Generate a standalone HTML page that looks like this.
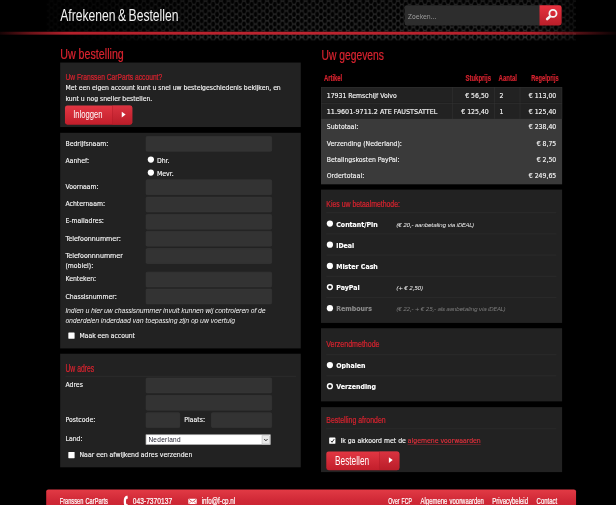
<!DOCTYPE html>
<html lang="nl">
<head>
<meta charset="utf-8">
<title>Afrekenen &amp; Bestellen - Franssen CarParts</title>
<style>
html,body{margin:0;padding:0;background:#000;overflow:hidden}
body{width:616px;height:505px;position:relative}
#page{position:absolute;left:0;top:0;width:1280px;height:1050px;transform:scale(0.48125);transform-origin:0 0;background:#000;color:#fff;font-family:"DejaVu Sans","Liberation Sans",sans-serif;font-size:12.8px;overflow:hidden}
#page *{box-sizing:border-box}
.abs{position:absolute}
.cd{display:inline-block;white-space:nowrap;transform-origin:0 50%;font-family:"Liberation Sans",sans-serif;font-weight:normal;line-height:1}
.cdr{transform-origin:100% 50%}
.red{color:#d8232f}
h1,h2,h3,p{margin:0;padding:0;font-weight:normal}
h3 .cd,h2 .cd,footer .cd{-webkit-text-stroke:0.5px currentColor}
h1 .cd{word-spacing:-0.08em}
.th .cd{-webkit-text-stroke:0.4px currentColor}
footer .cd{word-spacing:0.12em}
.panel{position:absolute;background:#222}
.t{position:absolute;white-space:nowrap;line-height:1}
input.f{position:absolute;background:#333;border:1px solid #3b3b3b;border-radius:3px;height:32px;padding:0;margin:0;display:block}
.lbl{position:absolute;white-space:nowrap;line-height:1;color:#f6f6f6;-webkit-text-stroke:0.28px currentColor}
.hr{position:absolute;height:2px;background:#2b2b2b}
.radio{position:absolute;width:13px;height:13px;border-radius:50%;background:#fff}
.radio.on{background:#1a1a1a;border:3.6px solid #fff}
.chk{position:absolute;width:13px;height:13px;background:#fff;border-radius:1px}
.btn{position:absolute;height:39px;border-radius:5px;background:linear-gradient(#e23743,#c21e2b);overflow:hidden}
.btn .sep{position:absolute;top:0;bottom:0;width:42px;right:0;background:linear-gradient(#da3340,#ba1d29);border-left:1px solid #b01a26}
.btn .arr{position:absolute;width:0;height:0;border-left:8px solid #fff;border-top:6.5px solid transparent;border-bottom:6.5px solid transparent}
.b{font-weight:bold}
.i{font-style:italic;-webkit-text-stroke:0 !important}
</style>
</head>
<body>
<div id="page">
<header>
<svg class="abs" style="left:96px;top:0" width="1101" height="90" viewBox="0 0 1101 90">
<defs>
<pattern id="hex" width="16" height="13.6" patternUnits="userSpaceOnUse" patternTransform="translate(3 2.4)">
<rect width="16" height="13.6" fill="#020202"/>
<path d="M2.66 6.8 L5.33 0 M10.67 0 L13.34 6.8 L10.67 13.6 M5.33 13.6 L2.66 6.8" fill="none" stroke="#2a2a2a" stroke-width="2.6"/>
<path d="M4.6 0 L11.4 0 M4.6 13.6 L11.4 13.6 M12.6 6.8 L16 6.8 M0 6.8 L3.4 6.8" fill="none" stroke="#3e3e3e" stroke-width="3"/>
</pattern>
<linearGradient id="hfade" x1="0" y1="0" x2="0" y2="1">
<stop offset="0" stop-color="#999"/><stop offset="0.5" stop-color="#bbb"/><stop offset="0.73" stop-color="#bbb"/><stop offset="0.8" stop-color="#fff"/><stop offset="0.9" stop-color="#fff"/><stop offset="0.945" stop-color="#000"/><stop offset="1" stop-color="#000"/>
</linearGradient>
<mask id="hm"><rect width="1101" height="90" fill="url(#hfade)"/></mask>
<linearGradient id="hfade2" x1="0" y1="0" x2="1" y2="0">
<stop offset="0" stop-color="#2a2a2a"/><stop offset="0.12" stop-color="#555"/><stop offset="0.3" stop-color="#ddd"/><stop offset="0.45" stop-color="#fff"/><stop offset="0.93" stop-color="#fff"/><stop offset="1" stop-color="#777"/>
</linearGradient>
<mask id="hm2"><rect width="1101" height="90" fill="url(#hfade2)"/></mask>
<linearGradient id="hfade3" x1="0" y1="0" x2="1" y2="0">
<stop offset="0" stop-color="#000"/><stop offset="0.03" stop-color="#000"/><stop offset="0.25" stop-color="#fff"/><stop offset="1" stop-color="#fff"/>
</linearGradient>
<mask id="hm3"><rect width="1101" height="66" fill="#fff"/><rect y="66" width="1101" height="24" fill="url(#hfade3)"/></mask>
</defs>
<g mask="url(#hm3)"><g mask="url(#hm2)"><rect width="1101" height="90" fill="url(#hex)" mask="url(#hm)"/></g></g>
</svg>
<div class="abs" style="left:0;top:66px;width:1280px;height:6.2px;background:linear-gradient(90deg,rgba(180,30,40,0.12) 0,rgba(180,30,40,0.6) 5%,#b4202b 11%,#bd2530 50%,#b4202b 86%,rgba(180,30,40,0.05) 100%)"></div>
<h1 class="t " style="left:124.5px;top:14.8px;font-size:34px;color:#f2f2f2"><span class="cd" id="title" style="transform:scaleX(0.7432)">Afrekenen &amp; Bestellen</span></h1>
<form class="abs" style="left:840.5px;top:11px;width:326px;height:41.5px">
<input type="text" value="Zoeken..." style="position:absolute;left:0;top:0;width:281px;height:41.5px;background:#2d2d2d;border:0;border-radius:4px 0 0 4px;color:#9c9c9c;font:12.8px 'DejaVu Sans',sans-serif;padding:5px 0 0 7px;margin:0">
<button type="button" style="position:absolute;left:280px;top:0;width:46px;height:41.5px;border:0;padding:0;margin:0;border-radius:0 5px 5px 0;background:linear-gradient(#e8323f,#b81e29)">
<svg class="abs" style="left:0;top:0" width="46" height="40" viewBox="0 0 46 40"><circle cx="28" cy="16.8" r="7.4" fill="none" stroke="#f4f4f4" stroke-width="3.8"/><path d="M21.2 24 L16 28.4" stroke="#f4f4f4" stroke-width="5.6" stroke-linecap="round"/></svg>
</button>
</form>
</header>
<main>
<section>
<h2 class="t red" style="left:124.5px;top:97.4px;font-size:30.5px"><span class="cd" id="h_best" style="transform:scaleX(0.7293)">Uw bestelling</span></h2>
<div class="panel" style="left:124.5px;top:130px;width:500.3px;height:134px">
<h3 class="t red" style="left:11.5px;top:19.3px;font-size:20px"><span class="cd" id="h_acc" style="transform:scaleX(0.6955)">Uw Franssen CarParts account?</span></h3>
<p id="p_acc1" class="lbl " style="left:11.5px;top:45.9px;font-size:12.66px">Met een eigen account kunt u snel uw bestelgeschiedenis bekijken, en</p>
<p id="p_acc2" class="lbl " style="left:11.5px;top:68.8px;font-size:12.66px">kunt u nog sneller bestellen.</p>
<a class="btn" style="left:10.5px;top:89.2px;width:140px;height:39.6px"><span class="t " style="left:16.7px;top:7.8px;font-size:23px;color:#fff"><span class="cd" id="b_inl" style="transform:scaleX(0.6932)">Inloggen</span></span><span class="sep"></span><span class="arr" style="left:118px;top:12.5px"></span></a>
</div>
<form class="panel" style="left:124.5px;top:275.5px;width:500.3px;height:448px">
<label id="l_bedr" class="lbl " style="left:11.5px;top:17.8px;font-size:12.8px">Bedrijfsnaam:</label><input class="f" type="text" style="left:178.9px;top:7.1px;width:261.5px">
<label id="l_aanhef" class="lbl " style="left:11.5px;top:52.9px;font-size:12.8px">Aanhef:</label>
<span class="radio" style="left:182.2px;top:49.4px"></span><label id="l_dhr" class="lbl " style="left:201.7px;top:53.2px;font-size:12.8px">Dhr.</label>
<span class="radio" style="left:182.2px;top:76.4px"></span><label id="l_mevr" class="lbl " style="left:201.7px;top:79.9px;font-size:12.8px">Mevr.</label>
<label id="l_voor" class="lbl " style="left:11.5px;top:106.7px;font-size:12.8px">Voornaam:</label><input class="f" type="text" style="left:178.9px;top:97.5px;width:261.5px">
<label id="l_acht" class="lbl " style="left:11.5px;top:142.5px;font-size:12.8px">Achternaam:</label><input class="f" type="text" style="left:178.9px;top:133.3px;width:261.5px">
<label id="l_mail" class="lbl " style="left:11.5px;top:178.3px;font-size:12.8px">E-mailadres:</label><input class="f" type="text" style="left:178.9px;top:169.1px;width:261.5px">
<label id="l_tel" class="lbl " style="left:11.5px;top:213.5px;font-size:13.2px">Telefoonnummer:</label><input class="f" type="text" style="left:178.9px;top:204.9px;width:261.5px">
<label id="l_mob1" class="lbl " style="left:11.5px;top:249.8px;font-size:13.2px">Telefoonnnummer</label><label id="l_mob2" class="lbl " style="left:11.5px;top:271.2px;font-size:12.8px">(mobiel):</label><input class="f" type="text" style="left:178.9px;top:240.9px;width:261.5px">
<label id="l_kent" class="lbl " style="left:11.5px;top:298.8px;font-size:12.8px">Kenteken:</label><input class="f" type="text" style="left:178.9px;top:289.1px;width:261.5px">
<label id="l_chas" class="lbl " style="left:11.5px;top:335.1px;font-size:12.8px">Chassisnummer:</label><input class="f" type="text" style="left:178.9px;top:324.9px;width:261.5px">
<p id="p_ch1" class="lbl i" style="left:11.5px;top:363.8px;font-size:13px;letter-spacing:-0.41px">Indien u hier uw chassisnummer invult kunnen wij controleren of de</p>
<p id="p_ch2" class="lbl i" style="left:11.5px;top:384.4px;font-size:13px;letter-spacing:-0.41px">onderdelen inderdaad van toepassing zijn op uw voertuig</p>
<span class="chk" style="left:17.5px;top:415.0px"></span><label id="l_maak" class="lbl " style="left:40.7px;top:416.6px;font-size:12.6px">Maak een account</label>
</form>
<form class="panel" style="left:124.5px;top:735px;width:500.3px;height:235.5px">
<h3 class="t red" style="left:11.5px;top:18.6px;font-size:21px"><span class="cd" id="h_adr" style="transform:scaleX(0.6708)">Uw adres</span></h3>
<div class="hr" style="left:11.5px;top:46px;width:479px"></div>
<label id="l_adres" class="lbl " style="left:11.5px;top:59.6px;font-size:12.8px">Adres</label><input class="f" type="text" style="left:178.9px;top:50.4px;width:261.5px">
<input class="f" type="text" style="left:178.9px;top:86.2px;width:261.5px">
<label id="l_post" class="lbl " style="left:11.5px;top:130.7px;font-size:12.8px">Postcode:</label><input class="f" type="text" style="left:178.9px;top:122.0px;width:70.5px">
<label id="l_plaats" class="lbl " style="left:258.5px;top:130.7px;font-size:12.8px">Plaats:</label><input class="f" type="text" style="left:314.5px;top:122.0px;width:125.8px">
<label id="l_land" class="lbl " style="left:11.5px;top:170.6px;font-size:12.8px">Land:</label>
<div class="abs" style="left:178.9px;top:168.0px;width:259px;height:21px;background:#fff;border:1px solid #999;color:#1c1c2a;font:13.5px/1 Liberation Sans,sans-serif"><span class="abs" id="sel_txt" style="left:4px;top:2.6px;letter-spacing:0.55px">Nederland</span><span class="abs" style="right:0.5px;top:0.5px;width:17px;height:18px;background:#e8e8e8;border:1px solid #b5b5b5"><svg class="abs" style="left:3.5px;top:5px" width="9" height="7" viewBox="0 0 9 7"><path d="M1 1.2 L4.5 5 L8 1.2" fill="none" stroke="#333" stroke-width="2"/></svg></span></div>
<span class="chk" style="left:17.5px;top:203.5px"></span><label id="l_naar" class="lbl " style="left:40.7px;top:204.5px;font-size:12.8px">Naar een afwijkend adres verzenden</label>
</form>
</section>
<section>
<h2 class="t red" style="left:667.5px;top:97.8px;font-size:30.5px"><span class="cd" id="h_geg" style="transform:scaleX(0.7027)">Uw gegevens</span></h2>
<span class="t red th" style="left:672.7px;top:151.7px;font-size:19px"><span class="cd" id="th_art" style="transform:scaleX(0.6441);font-weight:bold">Artikel</span></span>
<span class="t red th" style="left:720.8px;width:300px;text-align:right;top:151.7px;font-size:19px"><span class="cd cdr" id="th_stuk" style="transform:scaleX(0.6543);font-weight:bold">Stukprijs</span></span>
<span class="t red th" style="left:1036.4px;top:151.7px;font-size:19px"><span class="cd" id="th_aant" style="transform:scaleX(0.6552);font-weight:bold">Aantal</span></span>
<span class="t red th" style="left:861.0px;width:300px;text-align:right;top:151.7px;font-size:19px"><span class="cd cdr" id="th_reg" style="transform:scaleX(0.6196);font-weight:bold">Regelprijs</span></span>
<div class="abs" style="left:667px;top:180.5px;width:501px;height:202.5px;background:#3a3a3a">
<div class="abs" style="left:0;top:0px;width:501px;height:33.5px;background:#222;border:1px solid #333;border-bottom:0"></div><div class="abs" style="left:272.6px;top:0px;width:1px;height:33.5px;background:#363636"></div><div class="abs" style="left:360px;top:0px;width:1px;height:33.5px;background:#363636"></div><div class="abs" style="left:412.5px;top:0px;width:1px;height:33.5px;background:#363636"></div><span id="tn_r1" class="lbl " style="left:12.0px;top:12.5px;font-size:12.8px">17931 Remschijf Volvo</span><span id="tp_r1" class="lbl " style="left:48.6px;width:300px;text-align:right;top:12.5px;font-size:12.8px">€ 56,50</span><span id="tq_r1" class="lbl " style="left:370.9px;top:12.5px;font-size:12.8px">2</span><span id="tt_r1" class="lbl " style="left:188.8px;width:300px;text-align:right;top:12.5px;font-size:12.8px">€ 113,00</span>
<div class="abs" style="left:0;top:33.2px;width:501px;height:33.5px;background:#222;border:1px solid #333;border-bottom:0"></div><div class="abs" style="left:272.6px;top:33.2px;width:1px;height:33.5px;background:#363636"></div><div class="abs" style="left:360px;top:33.2px;width:1px;height:33.5px;background:#363636"></div><div class="abs" style="left:412.5px;top:33.2px;width:1px;height:33.5px;background:#363636"></div><span id="tn_r2" class="lbl " style="left:12.0px;top:45.6px;font-size:13.3px">11.9601-9711.2 ATE FAUSTSATTEL</span><span id="tp_r2" class="lbl " style="left:48.6px;width:300px;text-align:right;top:46.1px;font-size:12.8px">€ 125,40</span><span id="tq_r2" class="lbl " style="left:370.9px;top:46.1px;font-size:12.8px">1</span><span id="tt_r2" class="lbl " style="left:188.8px;width:300px;text-align:right;top:46.1px;font-size:12.8px">€ 125,40</span>
<span id="tl0" class="lbl " style="left:12.0px;top:77.8px;font-size:12.8px">Subtotaal:</span><span id="tv0" class="lbl " style="left:188.8px;width:300px;text-align:right;top:77.8px;font-size:12.8px">€ 238,40</span>
<span id="tl1" class="lbl " style="left:12.0px;top:112.1px;font-size:12.8px">Verzending (Nederland):</span><span id="tv1" class="lbl " style="left:188.8px;width:300px;text-align:right;top:112.1px;font-size:12.8px">€ 8,75</span>
<span id="tl2" class="lbl " style="left:12.0px;top:146.2px;font-size:12.8px">Betalingskosten PayPal:</span><span id="tv2" class="lbl " style="left:188.8px;width:300px;text-align:right;top:146.2px;font-size:12.8px">€ 2,50</span>
<span id="tl3" class="lbl " style="left:12.0px;top:179.2px;font-size:12.8px">Ordertotaal:</span><span id="tv3" class="lbl " style="left:188.8px;width:300px;text-align:right;top:179.2px;font-size:12.8px">€ 249,65</span>
</div>
<form class="panel" style="left:667px;top:394px;width:501px;height:277px">
<h3 class="t red" style="left:11.0px;top:19.6px;font-size:19.5px"><span class="cd" id="h_bet" style="transform:scaleX(0.7356)">Kies uw betaalmethode:</span></h3>
<div class="hr" style="left:11px;top:46.5px;width:478px"></div><span class="radio" style="left:12.2px;top:64.4px"></span><label id="pay0" class="lbl b" style="left:31.7px;top:66.6px;font-size:13px;color:#fff">Contant/Pin</label><span id="payn0" class="lbl i" style="left:156.4px;top:66.9px;font-size:12.2px;color:#efefef;letter-spacing:-0.7px">(€ 20,- aanbetaling via iDEAL)</span>
<div class="hr" style="left:11px;top:90.6px;width:478px"></div><span class="radio" style="left:12.2px;top:108.2px"></span><label id="pay1" class="lbl b" style="left:31.7px;top:110.4px;font-size:13px;color:#fff">iDeal</label>
<div class="hr" style="left:11px;top:134.7px;width:478px"></div><span class="radio" style="left:12.2px;top:151.9px"></span><label id="pay2" class="lbl b" style="left:31.7px;top:154.1px;font-size:13px;color:#fff">Mister Cash</label>
<div class="hr" style="left:11px;top:178.8px;width:478px"></div><span class="radio on" style="left:12.2px;top:195.7px"></span><label id="pay3" class="lbl b" style="left:31.7px;top:197.9px;font-size:13px;color:#fff">PayPal</label><span id="payn3" class="lbl i" style="left:156.4px;top:198.2px;font-size:12.2px;color:#efefef;letter-spacing:-0.7px">(+ € 2,50)</span>
<div class="hr" style="left:11px;top:222.9px;width:478px"></div><span class="radio" style="left:12.2px;top:239.5px"></span><label id="pay4" class="lbl b" style="left:31.7px;top:241.7px;font-size:13px;color:#8a8a8a">Rembours</label><span id="payn4" class="lbl i" style="left:156.4px;top:242.0px;font-size:12.2px;color:#7c7c7c;letter-spacing:-0.7px">(€ 22,- + € 25,- als aanbetaling via iDEAL)</span>
</form>
<form class="panel" style="left:667px;top:682px;width:501px;height:152px">
<h3 class="t red" style="left:11.0px;top:20.7px;font-size:20.5px"><span class="cd" id="h_verz" style="transform:scaleX(0.7135)">Verzendmethode</span></h3>
<div class="hr" style="left:11px;top:54.1px;width:478px"></div><span class="radio" style="left:12.2px;top:69.9px"></span><label id="ship0" class="lbl b" style="left:31.7px;top:72.1px;font-size:13px;color:#fff">Ophalen</label>
<div class="hr" style="left:11px;top:98.3px;width:478px"></div><span class="radio on" style="left:12.2px;top:114.1px"></span><label id="ship1" class="lbl b" style="left:31.7px;top:116.3px;font-size:13px;color:#fff">Verzending</label>
</form>
<form class="panel" style="left:667px;top:845.5px;width:501px;height:135.5px">
<h3 class="t red" style="left:11.0px;top:17.7px;font-size:20.5px"><span class="cd" id="h_afr" style="transform:scaleX(0.7023)">Bestelling afronden</span></h3>
<div class="hr" style="left:11px;top:44.8px;width:478px"></div>
<span class="chk" style="left:17.2px;top:63.5px"><svg class="abs" style="left:1.5px;top:1.5px" width="10" height="10" viewBox="0 0 10 10"><path d="M1.5 5 L4 8 L8.5 1.5" fill="none" stroke="#222" stroke-width="2"/></svg></span><label id="l_akk" class="lbl " style="left:40.5px;top:64.7px;font-size:12.8px">Ik ga akkoord met de <a id="a_voorw" style="color:#e8303c;border-bottom:1.5px solid #b02530">algemene voorwaarden</a></label>
<a class="btn" style="left:11.0px;top:92.2px;width:152px"><span class="t " style="left:18.0px;top:6.6px;font-size:26px;color:#fff"><span class="cd" id="b_best" style="transform:scaleX(0.6654)">Bestellen</span></span><span class="sep"></span><span class="arr" style="left:130px;top:12.5px"></span></a>
</form>
</section>
</main>
<footer class="abs" style="left:96px;top:1017px;width:1101px;height:40px;border-radius:4.5px 4.5px 0 0;background:linear-gradient(#e23a45,#cf2836 60%,#c92230)">
<span class="t " style="left:28.2px;top:13.1px;font-size:20px;color:#fff"><span class="cd" id="f_name" style="transform:scaleX(0.5882)">Franssen CarParts</span></span>
<svg class="abs" style="left:160px;top:12px" width="11" height="27" viewBox="0 0 11 27"><path d="M8.8 0.8 C3.4 1.4 1 5.5 1 13.2 C1 21 3.4 25 8.8 25.6 L9.8 19.4 L6.6 18.4 C5.6 15 5.6 11.2 6.6 7.8 L9.8 7 Z" fill="#fff"/></svg>
<span class="t " style="left:179.7px;top:13.1px;font-size:20px;color:#fff"><span class="cd" id="f_tel" style="transform:scaleX(0.6924)">043-7370137</span></span>
<svg class="abs" style="left:294.8px;top:18.5px" width="18" height="12" viewBox="0 0 18 12"><rect x="0" y="0" width="18" height="12" rx="1.5" fill="#fff"/><path d="M1 1.2 L9 7 L17 1.2 M1 11 L6.4 5.6 M17 11 L11.6 5.6" fill="none" stroke="#d22b38" stroke-width="1.5"/></svg>
<span class="t " style="left:323.3px;top:13.1px;font-size:20px;color:#fff"><span class="cd" id="f_mail" style="transform:scaleX(0.6505)">info@f-cp.nl</span></span>
<a class="t " style="left:710.9px;top:13.1px;font-size:20px;color:#fff"><span class="cd" id="f_l1" style="transform:scaleX(0.5341)">Over FCP</span></a>
<a class="t " style="left:777.8px;top:13.1px;font-size:20px;color:#fff"><span class="cd" id="f_l2" style="transform:scaleX(0.6145)">Algemene voorwaarden</span></a>
<a class="t " style="left:926.8px;top:13.1px;font-size:20px;color:#fff"><span class="cd" id="f_l3" style="transform:scaleX(0.6235)">Privacybeleid</span></a>
<a class="t " style="left:1019.2px;top:13.1px;font-size:20px;color:#fff"><span class="cd" id="f_l4" style="transform:scaleX(0.6174)">Contact</span></a>
</footer>
</div>
</body>
</html>
